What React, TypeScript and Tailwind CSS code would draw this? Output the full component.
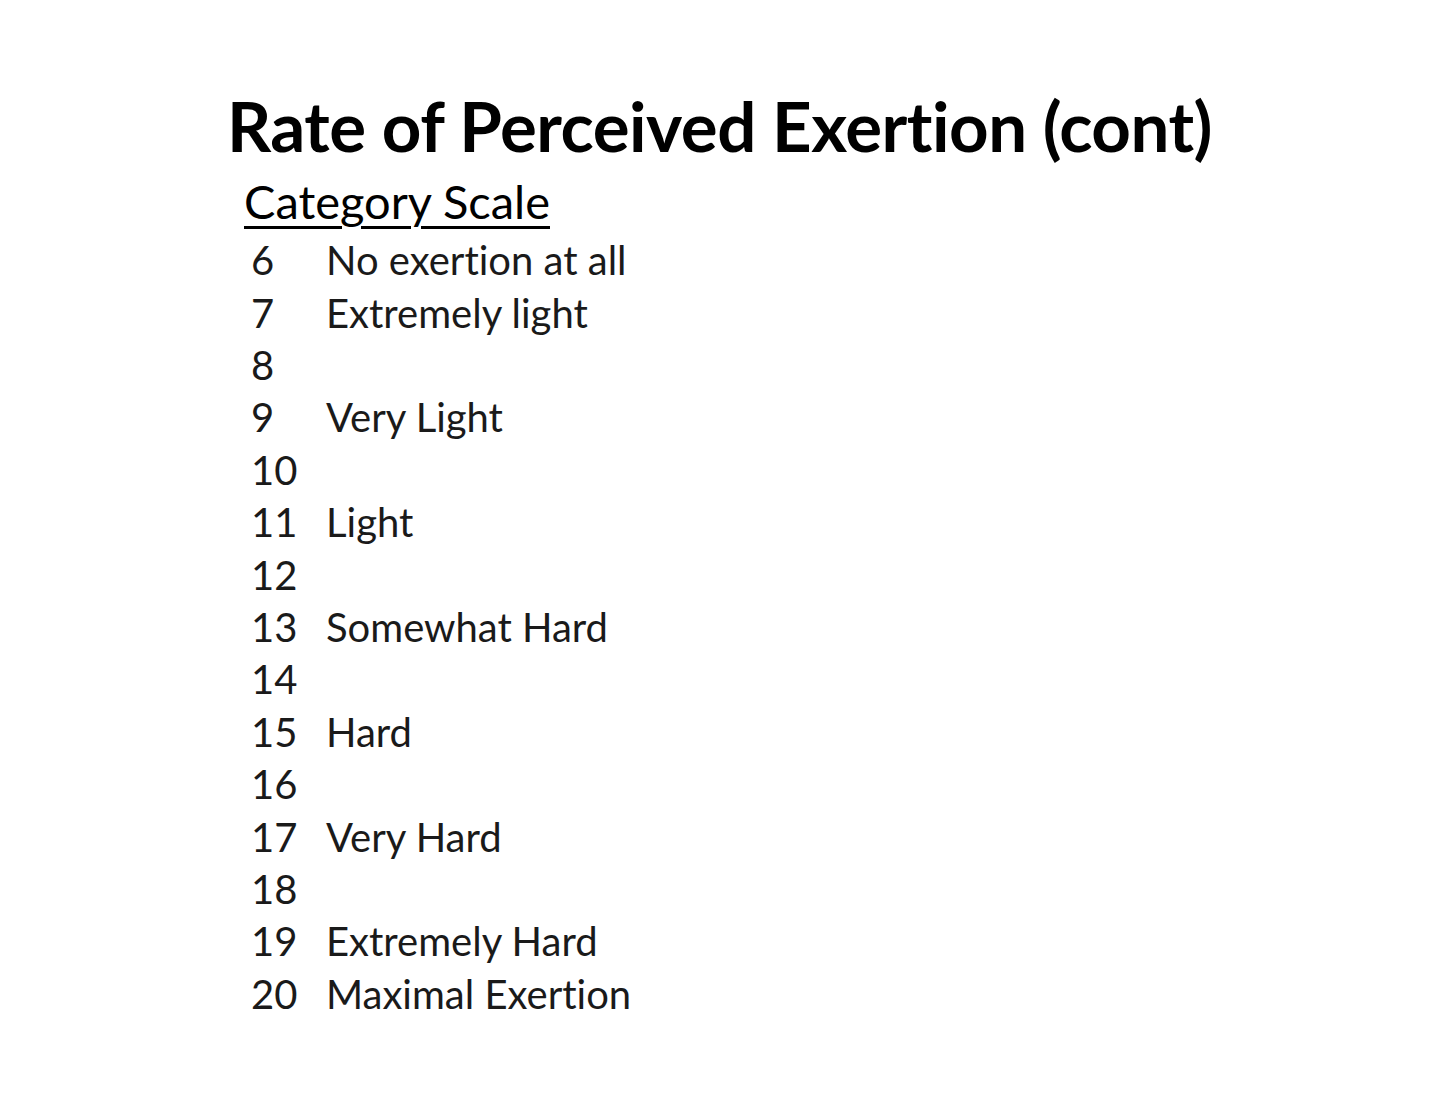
import React from "react";

const rows: [string, string][] = [
  ["6", "No exertion at all"],
  ["7", "Extremely light"],
  ["8", ""],
  ["9", "Very Light"],
  ["10", ""],
  ["11", "Light"],
  ["12", ""],
  ["13", "Somewhat Hard"],
  ["14", ""],
  ["15", "Hard"],
  ["16", ""],
  ["17", "Very Hard"],
  ["18", ""],
  ["19", "Extremely Hard"],
  ["20", "Maximal Exertion"],
];

export default function App() {
  return (
    <div
      className="w-[1440px] h-[1111px] bg-white text-[#111] overflow-hidden [font-variant-ligatures:none]"
      style={{ fontFamily: "Lato, 'Open Sans', sans-serif" }}
    >
      <div className="flex flex-col pl-[227px] pt-[84px]">
        <h1 className="text-[69px] font-bold leading-[84px] text-black tracking-[-0.5px]">
          Rate of Perceived Exertion (cont)
        </h1>
        <div className="pl-[17px] mt-[7px]">
          <div className="text-[47px] leading-[52px] underline decoration-[3px] underline-offset-[7px] text-black">
            Category Scale
          </div>
          <div className="flex flex-col mt-[7px] pl-[7px]">
            {rows.map(([n, t]) => (
              <div key={n} className="flex h-[52.4px] items-center text-[40px] text-[#1a1a1a]">
                <span className="w-[75px]">{n}</span>
                <span>{t}</span>
              </div>
            ))}
          </div>
        </div>
      </div>
    </div>
  );
}
